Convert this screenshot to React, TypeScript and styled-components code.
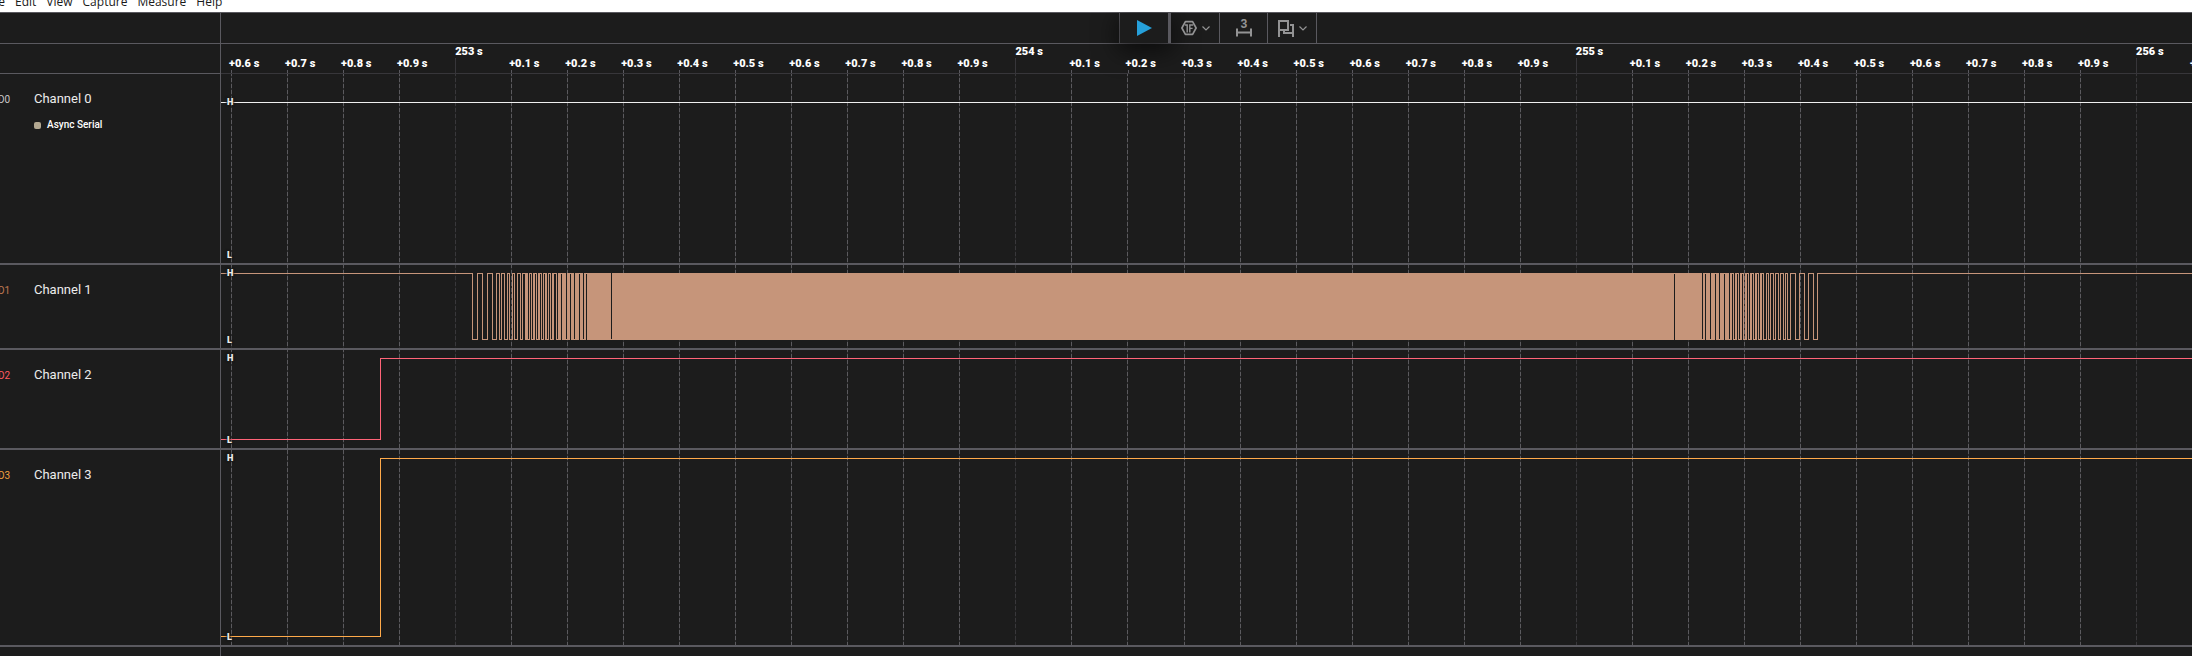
import React from "react";
import styled, { createGlobalStyle } from "styled-components";

const colors = {
  bg: "#1c1c1c",
  line: "#5a595f",
  lineDim: "#37363a",
  text: "#ececec",
  icon: "#939394",
  play: "#26a0da",
};

const PLOT_WIDTH = 1971;
const TICK_START = 10;
const TICK_STEP = 56.03;
const TICK_COUNT = 36;
const FIRST_TENTH = 6;
const FIRST_SECOND = 252;

const GlobalStyle = createGlobalStyle`
  * { box-sizing: border-box; }
  body {
    margin: 0;
    background: ${colors.bg};
    color: ${colors.text};
    font-family: Roboto, "Liberation Sans", sans-serif;
    overflow-x: hidden;
  }
  button { font: inherit; color: inherit; background: none; border: 0; padding: 0; margin: 0; }
`;

const Window = styled.div`
  display: flex;
  flex-direction: column;
  min-height: 100vh;
  overflow: hidden;
`;

const MenuBar = styled.nav`
  position: relative;
  z-index: 1;
  display: flex;
  align-items: flex-end;
  gap: 10px;
  height: 12px;
  margin-left: -14px;
  padding-bottom: 2px;
  overflow: hidden;
  background: #fff;
`;

const MenuItem = styled.button`
  flex: none;
  color: #1a1a1a;
  font-family: "Open Sans", "Noto Sans", sans-serif;
  font-size: 12px;
  line-height: 16px;
`;

const Split = styled.div`
  display: grid;
  grid-template-columns: 221px minmax(0, 1fr);
`;

const ToolbarRow = styled(Split)`
  height: 32px;
  border-top: 1px solid ${colors.line};
  border-bottom: 1px solid ${colors.line};
`;

const Gutter = styled.div`
  border-right: 1px solid ${colors.line};
`;

const ToolbarArea = styled.div`
  display: flex;
  justify-content: center;
  padding-left: 23px;
`;

const Toolbar = styled.div`
  display: flex;
  border-left: 1px solid ${colors.line};
`;

const ToolButton = styled.button<{ $primary?: boolean; $narrow?: boolean }>`
  display: flex;
  align-items: center;
  justify-content: center;
  gap: 5px;
  width: ${(p) => (p.$primary ? 51 : p.$narrow ? 48 : 49)}px;
  border-right: ${(p) => (p.$primary ? 3 : 1)}px solid ${colors.line};
  box-shadow: ${(p) => (p.$primary ? "0 6px 24px 2px rgba(0, 0, 0, 0.6)" : "none")};
  color: ${colors.icon};
  svg { flex: none; display: block; }
`;

const RulerRow = styled(Split)`
  height: 30px;
`;

const RulerGutter = styled(Gutter)`
  border-bottom: 1px solid ${colors.line};
`;

const Ruler = styled.div`
  display: flex;
  padding-left: 8px;
  overflow: hidden;
  border-bottom: 1px solid ${colors.lineDim};
`;

const Mark = styled.div`
  display: flex;
  flex-direction: column;
  justify-content: flex-end;
  flex: 0 0 calc(100% / 35.03);
  min-width: 0;
`;

const MarkLabel = styled.span<{ $major: boolean }>`
  padding-left: ${(p) => (p.$major ? 2 : 0)}px;
  color: #fff;
  font-size: 11px;
  font-weight: 900;
  line-height: 12px;
  white-space: nowrap;
`;

const MarkTick = styled.span<{ $major: boolean }>`
  width: 1px;
  height: ${(p) => (p.$major ? 15 : 3)}px;
  margin-left: 2px;
  background: ${(p) => (p.$major ? colors.lineDim : colors.line)};
`;

const ChannelRow = styled(Split)`
  border-bottom: 2px solid ${colors.line};
`;

const ChannelInfo = styled.div`
  display: grid;
  grid-template-columns: 36px 1fr;
  align-content: start;
  margin-left: -2px;
  padding-top: 16px;
  border-right: 1px solid ${colors.line};
`;

const ChannelId = styled.span<{ $color: string }>`
  padding-top: 2px;
  color: ${(p) => p.$color};
  font-size: 10px;
  line-height: 16px;
`;

const ChannelName = styled.span`
  font-size: 13px;
  line-height: 18px;
`;

const Analyzer = styled.span`
  grid-column: 2;
  display: flex;
  align-items: center;
  gap: 6px;
  margin-top: 9px;
  color: #fff;
  font-size: 10px;
  font-weight: 500;
  line-height: 16px;
`;

const Swatch = styled.i`
  width: 7px;
  height: 7px;
  border-radius: 2px;
  background: #b3a891;
`;

const Plot = styled.div`
  position: relative;
  svg { display: block; width: 100%; }
`;

const Level = styled.span<{ $y: number }>`
  position: absolute;
  left: 6px;
  top: ${(p) => p.$y}px;
  font-size: 9px;
  font-weight: 900;
  line-height: 12px;
  text-shadow: 0 0 2px ${colors.bg}, 0 0 2px ${colors.bg}, 0 0 3px ${colors.bg};
`;

const Footer = styled(Split)`
  flex: 1 0 9px;
`;

type Run = [start: number, width: number];

const edges = (...xs: number[]): Run[] => xs.map((x) => [x, 1]);

/* Solid columns at the start of the burst; the line is low after the first. */
const burstHead: Run[] = [
  ...edges(32, 37, 42, 47, 52, 56, 59, 61, 64, 67, 69, 72, 74, 77, 80, 82),
  [85, 3], [89, 1], [91, 1], [93, 2], [96, 1], [98, 2], [101, 1], [103, 1],
  [105, 2], [108, 1], [110, 1], [112, 2], [116, 1], [118, 3], [122, 4],
  [127, 3], [131, 3], [135, 4], [140, 3], [144, 2], [147, 24], [172, 30],
].map(([x, w]) => [x + 219, w] as Run);

/* Solid columns at the end of the burst; the line is low before the last. */
const burstTail: Run[] = [
  [-998, 1032], [35, 27], [63, 2], [66, 4], [71, 4], [76, 3], [80, 4], [85, 4],
  [90, 2], [93, 1], [95, 2], [98, 1], [100, 2], [103, 1], [105, 2], [108, 1],
  [110, 2], [113, 1], [115, 2], [118, 1], [120, 2],
  ...edges(123, 126, 128, 130, 133, 135, 138, 140, 143, 145, 147, 150, 155, 159, 164, 168, 173, 177),
].map(([x, w]) => [x + 1419, w] as Run);

const box = (x: number, y: number, w: number, h: number) => `M${x} ${y}h${w}v${h}h${-w}z`;

function burstPath(runs: Run[], lowGap: (i: number) => boolean, high: number, low: number) {
  return runs
    .map(([x, w], i) => {
      const next = runs[i + 1];
      const gap = next ? box(x + w, lowGap(i) ? low : high, next[0] - x - w, 1) : "";
      return box(x, high, w, low - high + 1) + gap;
    })
    .join("");
}

type Wave = "high" | "burst" | "step";

interface Channel {
  name: string;
  id: string;
  color: string;
  idColor: string;
  height: number;
  high: number;
  dashShift: number;
  wave: Wave;
  analyzer?: string;
}

const channels: Channel[] = [
  { id: "D0", name: "Channel 0", color: "#f0f0f0", idColor: "#c9c9c9", height: 189, high: 28, dashShift: 2, wave: "high", analyzer: "Async Serial" },
  { id: "D1", name: "Channel 1", color: "#c6957a", idColor: "#c07a52", height: 83, high: 8, dashShift: 1, wave: "burst" },
  { id: "D2", name: "Channel 2", color: "#ff6478", idColor: "#ff5a62", height: 98, high: 8, dashShift: 2, wave: "step" },
  { id: "D3", name: "Channel 3", color: "#ffaa4a", idColor: "#f0a040", height: 195, high: 8, dashShift: 0, wave: "step" },
];

function wavePath(wave: Wave, high: number, low: number) {
  if (wave === "high") return box(0, high, PLOT_WIDTH, 1);
  if (wave === "step")
    return box(0, low, 160, 1) + box(159, high, 1, low - high + 1) + box(159, high, PLOT_WIDTH - 159, 1);
  const start = burstHead[0][0];
  const end = burstTail[burstTail.length - 1][0];
  return (
    box(0, high, start, 1) +
    burstPath(burstHead, (i) => i % 2 === 0, high, low) +
    burstPath(burstTail, (i) => (burstTail.length - i) % 2 === 0, high, low) +
    box(end, high, PLOT_WIDTH - end, 1)
  );
}

const ticks = Array.from({ length: TICK_COUNT }, (_, i) => {
  const tenth = (FIRST_TENTH + i) % 10;
  const second = FIRST_SECOND + Math.floor((FIRST_TENTH + i) / 10);
  return {
    x: Math.round(TICK_START + TICK_STEP * i),
    major: tenth === 0,
    label: tenth === 0 ? `${second} s` : `+0.${tenth} s`,
  };
});

function Waveform({ channel }: { channel: Channel }) {
  const { height, high, color, wave, dashShift } = channel;
  const low = height - 9;
  return (
    <Plot>
      <svg height={height} viewBox={`0 0 ${PLOT_WIDTH} ${height}`} preserveAspectRatio="none" shapeRendering="crispEdges" aria-hidden="true">
        {ticks.map((t) => (
          <g key={t.x}>
            <rect x={t.x} y={0} width={1} height={height} fill={t.major ? "#222222" : "#2c2c2d"} />
            <line
              x1={t.x + 0.5}
              x2={t.x + 0.5}
              y1={0}
              y2={height}
              stroke={t.major ? "#39383b" : "#5b5a5e"}
              strokeDasharray="4 2"
              strokeDashoffset={dashShift}
            />
          </g>
        ))}
        <path d={wavePath(wave, high, low)} fill={color} />
      </svg>
      <Level $y={high - 6}>H</Level>
      <Level $y={low - 5}>L</Level>
    </Plot>
  );
}

const Chevron = () => (
  <svg width="8" height="5" viewBox="0 0 8 5" fill="none" stroke="currentColor" strokeWidth="1.2" aria-hidden="true">
    <path d="M.5 .5 4 4 7.5 .5" />
  </svg>
);

const PlayIcon = () => (
  <svg width="15" height="16" viewBox="0 0 15 16" aria-hidden="true">
    <path d="M0 0 15 8 0 16z" fill={colors.play} />
  </svg>
);

const TriggerIcon = () => (
  <svg width="16" height="16" viewBox="0 0 16 16" fill="none" stroke="currentColor" aria-hidden="true">
    <path d="M4.4 1.7h7.2L15.1 8l-3.5 6.3H4.4L.9 8z" strokeWidth="1.7" strokeLinejoin="round" />
    <path d="M3.8 5h2.4v7.4M8.8 12.4V5h3.4M8.8 8.4h2.8" strokeWidth="1.4" />
  </svg>
);

const MeasureIcon = () => (
  <svg width="16" height="18" viewBox="0 0 16 18" aria-hidden="true">
    <text x="8" y="9" textAnchor="middle" fontSize="12" fontWeight="700" fill="currentColor">3</text>
    <path d="M1 9.5v8M15 9.5v8M1 13.5h14" fill="none" stroke="currentColor" strokeWidth="2" />
  </svg>
);

const FlagsIcon = () => (
  <svg width="16" height="17" viewBox="0 0 16 17" fill="none" stroke="currentColor" strokeWidth="2" aria-hidden="true">
    <path d="M1 17V1h9v9H1" />
    <path d="M12 5h3v12M6 10v3h9" />
  </svg>
);

export default function App() {
  return (
    <Window>
      <GlobalStyle />
      <MenuBar>
        {["File", "Edit", "View", "Capture", "Measure", "Help"].map((m) => (
          <MenuItem key={m}>{m}</MenuItem>
        ))}
      </MenuBar>
      <ToolbarRow>
        <Gutter />
        <ToolbarArea>
          <Toolbar role="toolbar">
            <ToolButton $primary aria-label="Start capture"><PlayIcon /></ToolButton>
            <ToolButton aria-label="Trigger"><TriggerIcon /><Chevron /></ToolButton>
            <ToolButton $narrow aria-label="Measurements"><MeasureIcon /></ToolButton>
            <ToolButton aria-label="Markers"><FlagsIcon /><Chevron /></ToolButton>
          </Toolbar>
        </ToolbarArea>
      </ToolbarRow>
      <RulerRow>
        <RulerGutter />
        <Ruler>
          {ticks.map((t) => (
            <Mark key={t.x}>
              <MarkLabel $major={t.major}>{t.label}</MarkLabel>
              <MarkTick $major={t.major} />
            </Mark>
          ))}
        </Ruler>
      </RulerRow>
      <main>
        {channels.map((c) => (
          <ChannelRow key={c.id}>
            <ChannelInfo>
              <ChannelId $color={c.idColor}>{c.id}</ChannelId>
              <ChannelName>{c.name}</ChannelName>
              {c.analyzer && <Analyzer><Swatch />{c.analyzer}</Analyzer>}
            </ChannelInfo>
            <Waveform channel={c} />
          </ChannelRow>
        ))}
      </main>
      <Footer>
        <Gutter />
        <div />
      </Footer>
    </Window>
  );
}
